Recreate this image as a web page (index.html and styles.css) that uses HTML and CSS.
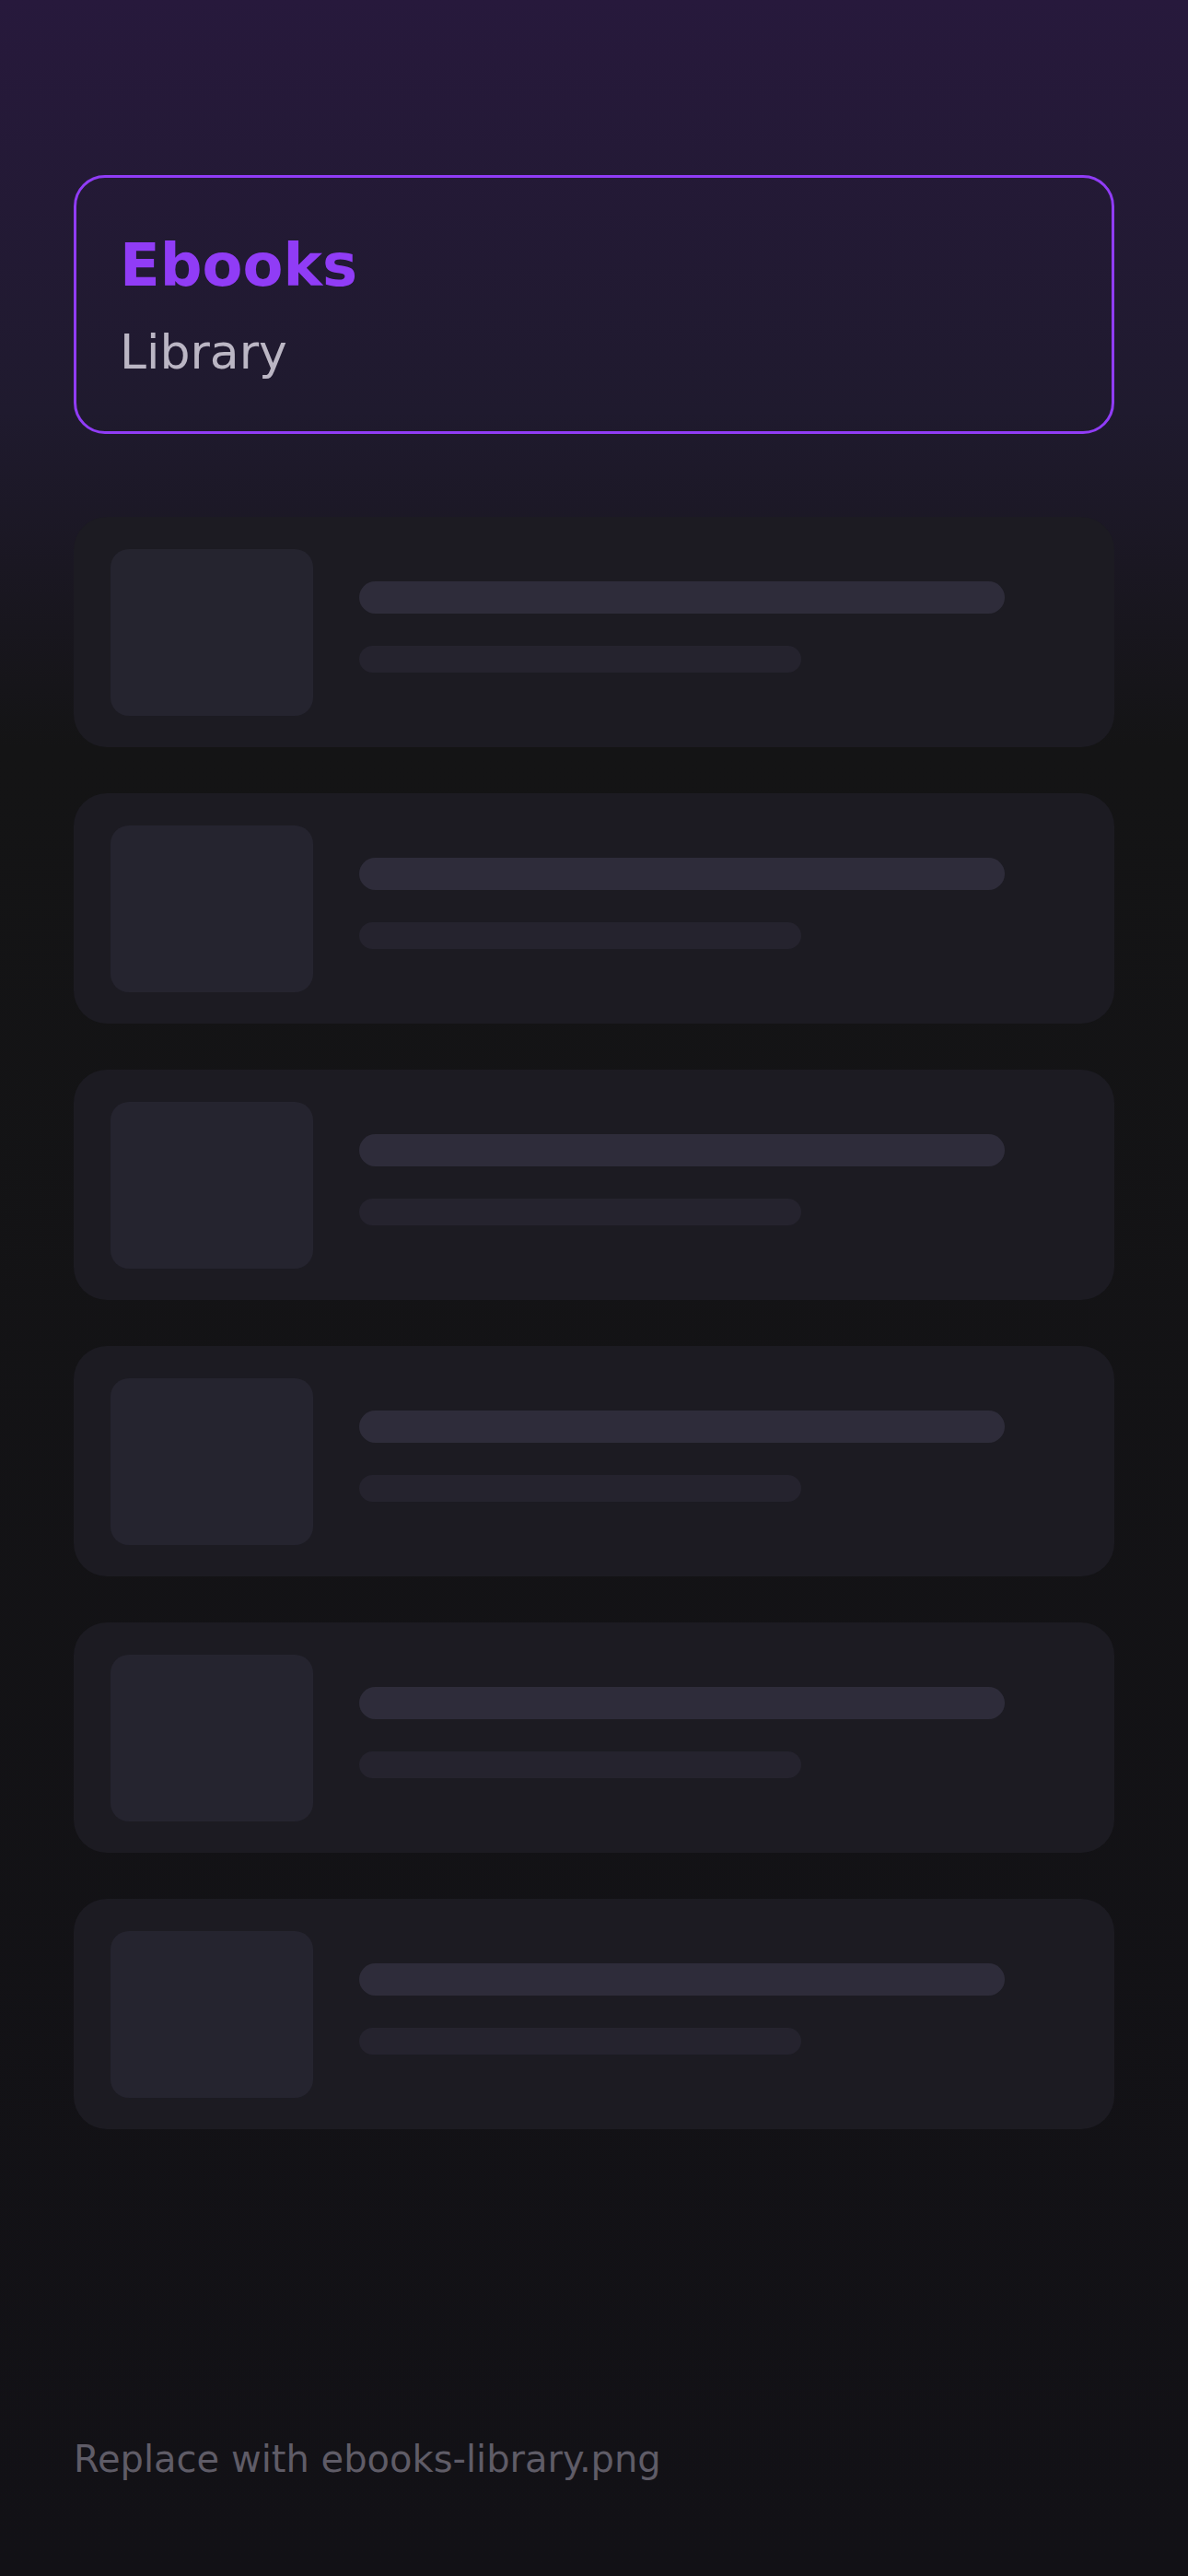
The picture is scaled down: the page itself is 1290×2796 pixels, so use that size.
FILE: index.html
```
<!DOCTYPE html>
<html lang="en">
<head>
    <meta charset="UTF-8">
    <meta name="viewport" content="width=device-width, initial-scale=1.0">
    <title>Ebooks Library</title>
    <link rel="stylesheet" href="styles.css">
</head>
<body>
    <div class="page">
        <header class="hero">
            <h1 class="hero-title">Ebooks</h1>
            <p class="hero-subtitle">Library</p>
        </header>

        <ul class="book-list">
            <li class="book-card">
                <div class="book-cover"></div>
                <div class="book-lines">
                    <div class="line line-title"></div>
                    <div class="line line-meta"></div>
                </div>
            </li>
            <li class="book-card">
                <div class="book-cover"></div>
                <div class="book-lines">
                    <div class="line line-title"></div>
                    <div class="line line-meta"></div>
                </div>
            </li>
            <li class="book-card">
                <div class="book-cover"></div>
                <div class="book-lines">
                    <div class="line line-title"></div>
                    <div class="line line-meta"></div>
                </div>
            </li>
            <li class="book-card">
                <div class="book-cover"></div>
                <div class="book-lines">
                    <div class="line line-title"></div>
                    <div class="line line-meta"></div>
                </div>
            </li>
            <li class="book-card">
                <div class="book-cover"></div>
                <div class="book-lines">
                    <div class="line line-title"></div>
                    <div class="line line-meta"></div>
                </div>
            </li>
            <li class="book-card">
                <div class="book-cover"></div>
                <div class="book-lines">
                    <div class="line line-title"></div>
                    <div class="line line-meta"></div>
                </div>
            </li>
        </ul>

        <footer class="placeholder-note">Replace with ebooks-library.png</footer>
    </div>
</body>
</html>
```

FILE: styles.css
```
html,
body {
    margin: 0;
    padding: 0;
}

body {
    font-family: "DejaVu Sans", sans-serif;
    background-color: #121116;
    background-image: linear-gradient(180deg, #27193c 0%, #1f1a2e 16%, #1a1722 22%, #141415 29%, #121116 100%);
    background-repeat: no-repeat;
    min-height: 100vh;
}

.page {
    box-sizing: border-box;
    min-height: 100vh;
    padding: 190px 80px 103px;
    display: flex;
    flex-direction: column;
}

/* Header card */
.hero {
    border: 3px solid #903cf6;
    border-radius: 34px;
    padding: 56px 44px 55px 47px;
}

.hero-title {
    margin: 0;
    font-size: 64px;
    line-height: 78px;
    font-weight: bold;
    color: #903cf6;
}

.hero-subtitle {
    margin: 24px 0 0;
    font-size: 52px;
    line-height: 62px;
    color: #bbb6c4;
}

/* Skeleton list */
.book-list {
    list-style: none;
    margin: 90px 0 0;
    padding: 0;
    display: flex;
    flex-direction: column;
    gap: 50px;
}

.book-card {
    height: 250px;
    box-sizing: border-box;
    padding: 35px 40px;
    background-color: #1c1b22;
    border-radius: 36px;
    display: flex;
    gap: 50px;
}

.book-cover {
    width: 220px;
    height: 181px;
    border-radius: 20px;
    background-color: #25242f;
    flex-shrink: 0;
}

.book-lines {
    padding-top: 35px;
    display: flex;
    flex-direction: column;
    gap: 35px;
}

.line {
    border-radius: 20px;
}

.line-title {
    width: 701px;
    height: 35px;
    background-color: #2e2c3a;
}

.line-meta {
    width: 480px;
    height: 29px;
    background-color: #25232e;
}

.placeholder-note {
    margin-top: auto;
    font-size: 40px;
    line-height: 48px;
    color: #5f5c67;
}
```
